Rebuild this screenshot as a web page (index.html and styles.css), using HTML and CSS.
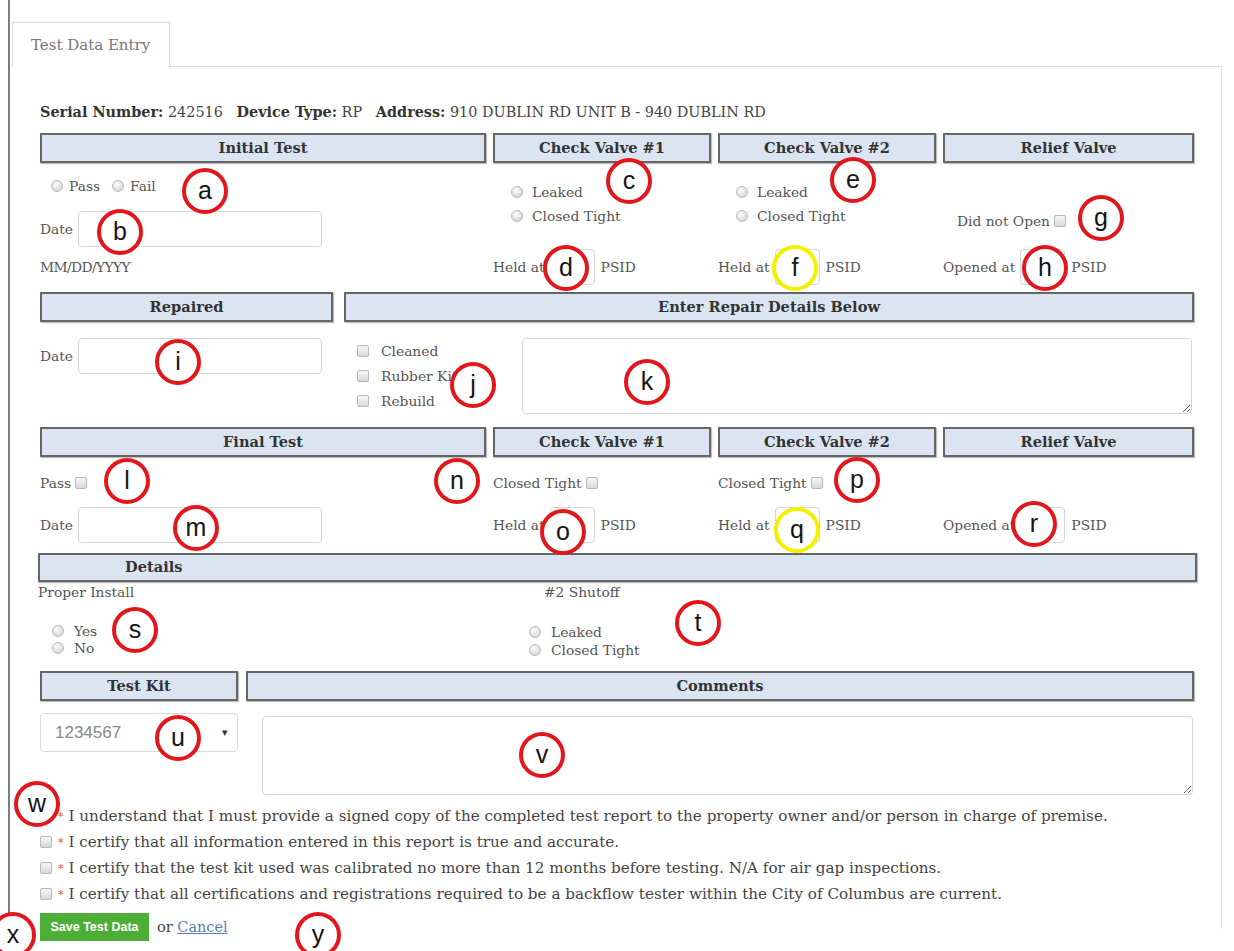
FILE: index.html
```html
<!DOCTYPE html>
<html lang="en">
<head>
<meta charset="utf-8">
<title>Test Data Entry</title>
<link rel="stylesheet" href="styles.css">
</head>
<body>
<div class="page">
  <div class="tabs">
    <div class="tab">Test Data Entry</div>
    <div class="tab-fill"></div>
  </div>

  <div class="panel">
    <p class="device"><b>Serial Number:</b> 242516 &nbsp; <b>Device Type:</b> RP &nbsp; <b>Address:</b> 910 DUBLIN RD UNIT B - 940 DUBLIN RD</p>

    <!-- initial test -->
    <div class="sec sec-4 rows-1">
      <div class="hd">Initial Test</div>
      <div class="hd">Check Valve #1</div>
      <div class="hd">Check Valve #2</div>
      <div class="hd">Relief Valve</div>

      <div class="cell init">
        <div class="inline-radios">
          <label><input type="radio" name="init"> Pass</label>
          <label><input type="radio" name="init"> Fail</label>
        </div>
        <div class="date-row"><span class="lbl">Date</span><input class="text date" type="text"></div>
        <div class="hint">MM/DD/YYYY</div>
      </div>
      <div class="cell valve">
        <label class="rline"><input type="radio" name="cv1"> Leaked</label>
        <label class="rline"><input type="radio" name="cv1"> Closed Tight</label>
        <div class="held"><span class="lbl">Held at</span><input class="text small" type="text"><span class="lbl">PSID</span></div>
      </div>
      <div class="cell valve">
        <label class="rline"><input type="radio" name="cv2"> Leaked</label>
        <label class="rline"><input type="radio" name="cv2"> Closed Tight</label>
        <div class="held"><span class="lbl">Held at</span><input class="text small" type="text"><span class="lbl">PSID</span></div>
      </div>
      <div class="cell relief">
        <label class="noopen">Did not Open <input type="checkbox"></label>
        <div class="held"><span class="lbl">Opened at</span><input class="text small" type="text"><span class="lbl">PSID</span></div>
      </div>
    </div>

    <!-- repairs -->
    <div class="sec sec-2 rows-2">
      <div class="hd">Repaired</div>
      <div class="hd">Enter Repair Details Below</div>

      <div class="cell repaired">
        <div class="date-row"><span class="lbl">Date</span><input class="text date" type="text"></div>
      </div>
      <div class="cell repair">
        <div class="checks">
          <label><input type="checkbox"> Cleaned</label>
          <label><input type="checkbox"> Rubber Kit</label>
          <label><input type="checkbox"> Rebuild</label>
        </div>
        <textarea class="repair-notes"></textarea>
      </div>
    </div>

    <!-- final test -->
    <div class="sec sec-4 rows-3">
      <div class="hd">Final Test</div>
      <div class="hd">Check Valve #1</div>
      <div class="hd">Check Valve #2</div>
      <div class="hd">Relief Valve</div>

      <div class="cell final">
        <label class="cline">Pass <input type="checkbox"></label>
        <div class="date-row"><span class="lbl">Date</span><input class="text date" type="text"></div>
      </div>
      <div class="cell final">
        <label class="cline">Closed Tight <input type="checkbox"></label>
        <div class="held"><span class="lbl">Held at</span><input class="text small" type="text"><span class="lbl">PSID</span></div>
      </div>
      <div class="cell final">
        <label class="cline">Closed Tight <input type="checkbox"></label>
        <div class="held"><span class="lbl">Held at</span><input class="text small" type="text"><span class="lbl">PSID</span></div>
      </div>
      <div class="cell final-relief">
        <div class="held"><span class="lbl">Opened at</span><input class="text small" type="text"><span class="lbl">PSID</span></div>
      </div>
    </div>

    <!-- details -->
    <div class="hd details-hd">Details</div>
    <div class="details">
      <div class="dcol install">
        <div class="dtitle">Proper Install</div>
        <div class="dradios">
          <label><input type="radio" name="inst"> Yes</label>
          <label><input type="radio" name="inst"> No</label>
        </div>
      </div>
      <div class="dcol shutoff">
        <div class="dtitle">#2 Shutoff</div>
        <div class="dradios">
          <label><input type="radio" name="shut"> Leaked</label>
          <label><input type="radio" name="shut"> Closed Tight</label>
        </div>
      </div>
    </div>

    <!-- kit and comments -->
    <div class="sec sec-kit rows-4">
      <div class="hd">Test Kit</div>
      <div class="hd">Comments</div>
      <div class="cell">
        <div class="select"><span class="sel-val">1234567</span><span class="sel-arrow">&#9662;</span></div>
      </div>
      <div class="cell">
        <textarea class="comments"></textarea>
      </div>
    </div>

    <ul class="certs">
      <li><input type="checkbox"><span class="req">*</span>I understand that I must provide a signed copy of the completed test report to the property owner and/or person in charge of premise.</li>
      <li><input type="checkbox"><span class="req">*</span>I certify that all information entered in this report is true and accurate.</li>
      <li><input type="checkbox"><span class="req">*</span>I certify that the test kit used was calibrated no more than 12 months before testing. N/A for air gap inspections.</li>
      <li><input type="checkbox"><span class="req">*</span>I certify that all certifications and registrations required to be a backflow tester within the City of Columbus are current.</li>
    </ul>

    <div class="actions">
      <button class="save" type="button">Save Test Data</button>
      <span class="or">or <a href="#">Cancel</a></span>
    </div>
  </div>
</div>

<!-- lettered callouts over the form fields -->
<div class="marks">
  <span class="mark m-a">a</span>
  <span class="mark m-b">b</span>
  <span class="mark m-c">c</span>
  <span class="mark m-d">d</span>
  <span class="mark m-e">e</span>
  <span class="mark yellow m-f">f</span>
  <span class="mark m-g">g</span>
  <span class="mark m-h">h</span>
  <span class="mark m-i">i</span>
  <span class="mark m-j">j</span>
  <span class="mark m-k">k</span>
  <span class="mark m-l">l</span>
  <span class="mark m-m">m</span>
  <span class="mark m-n">n</span>
  <span class="mark m-o">o</span>
  <span class="mark m-p">p</span>
  <span class="mark yellow m-q">q</span>
  <span class="mark m-r">r</span>
  <span class="mark m-s">s</span>
  <span class="mark m-t">t</span>
  <span class="mark m-u">u</span>
  <span class="mark m-v">v</span>
  <span class="mark m-w">w</span>
  <span class="mark m-x">x</span>
  <span class="mark m-y">y</span>
</div>
</body>
</html>
```

FILE: styles.css
```css
html, body {
  margin: 0;
  padding: 0;
  background: #fff;
}

body {
  font-family: "DejaVu Serif", "Liberation Serif", serif;
  font-size: 13.8px;
  color: #444;
  width: 1234px;
  height: 951px;
  overflow: hidden;
}

/* outer frame: dark rule on the left edge */
.page {
  margin-left: 8px;
  width: 1214px;
  height: 951px;
  box-sizing: border-box;
  border-left: 2px solid #7d7d7d;
  padding-top: 22px;
  padding-left: 2px;
}

/* tab strip */
.tabs {
  display: flex;
  height: 45px;
  width: 1210px;
}

.tab {
  width: 158px;
  box-sizing: border-box;
  border: 1px solid #dcdcdc;
  border-bottom: none;
  padding-left: 18px;
  line-height: 44px;
  font-size: 15px;
  color: #777;
}

.tab-fill {
  flex: 1;
  border-bottom: 1px solid #dcdcdc;
}

.panel {
  width: 1210px;
  height: 862px;
  box-sizing: border-box;
  border-right: 1px solid #e6e6e6;
  padding-left: 28px;
  padding-top: 36px;
}

.device {
  margin: 0 0 12px;
  line-height: 18px;
  font-size: 14.4px;
  color: #444;
}

.device b {
  color: #333;
}

/* section header bars */
.hd {
  height: 30px;
  box-sizing: border-box;
  border: 2px solid #666;
  background: #dbe5f2;
  box-shadow: 1px 1px 1px rgba(0, 0, 0, 0.25);
  font-weight: bold;
  font-size: 14.6px;
  text-align: center;
  line-height: 25px;
  color: #333;
}

.sec {
  display: grid;
  column-gap: 7px;
}

.sec-4 {
  grid-template-columns: 446px 218px 218px 251px;
}

.sec-2 {
  grid-template-columns: 293px 850px;
  column-gap: 11px;
}

.sec-kit {
  grid-template-columns: 198px 948px;
  column-gap: 8px;
}

.rows-1 { grid-template-rows: 30px 129px; }
.rows-2 { grid-template-rows: 31px 104px; }
.rows-3 { grid-template-rows: 31px 95px; }
.rows-4 { grid-template-rows: 30px 102px; }

.cell {
  min-width: 0;
}

label {
  color: #555;
}

.lbl {
  color: #555;
}

/* native controls restyled as soft grey widgets */
input[type="radio"],
input[type="checkbox"] {
  -webkit-appearance: none;
  appearance: none;
  margin: 0;
  width: 12px;
  height: 12px;
  box-sizing: border-box;
  border: 1px solid #b9b9b9;
  vertical-align: middle;
  flex: none;
}

input[type="radio"] {
  border-radius: 50%;
  background: radial-gradient(circle at 40% 35%, #fbfbfb 0, #e2e2e2 55%, #cfcfcf 100%);
}

input[type="checkbox"] {
  border-radius: 2px;
  background: linear-gradient(#f6f6f6, #d9d9d9);
}

.text {
  box-sizing: border-box;
  border: 1px solid #d6d6d6;
  border-radius: 4px;
  background: #fff;
  margin: 0;
  font: inherit;
}

.date {
  width: 244px;
  height: 36px;
}

.small {
  width: 45px;
  height: 36px;
  margin: 0 6px 0 5px;
}

/* initial test column */
.init {
  padding-top: 11px;
}

.inline-radios {
  display: flex;
  height: 24px;
  align-items: center;
  padding-left: 11px;
}

.inline-radios label {
  display: flex;
  align-items: center;
  gap: 6px;
  margin-right: 12px;
}

.date-row {
  display: flex;
  align-items: center;
  height: 36px;
}

.date-row .lbl {
  width: 38px;
}

.init .date-row {
  margin-top: 13px;
}

.hint {
  margin-top: 8px;
  line-height: 24px;
  color: #555;
  letter-spacing: -0.6px;
}

/* check valve columns */
.valve {
  padding-top: 17px;
}

.rline {
  display: flex;
  align-items: center;
  height: 24px;
  padding-left: 18px;
  gap: 9px;
}

.held {
  display: flex;
  align-items: center;
  height: 36px;
  margin-top: 21px;
}

.relief {
  padding-top: 46px;
}

.noopen {
  display: flex;
  align-items: center;
  height: 24px;
  padding-left: 14px;
  gap: 4px;
}

.relief .held {
  margin-top: 16px;
}

/* repairs */
.repaired {
  padding-top: 15px;
}

.repair {
  display: flex;
  padding-top: 15px;
}

.checks {
  width: 178px;
  box-sizing: border-box;
  padding-left: 13px;
}

.checks label {
  display: flex;
  align-items: center;
  gap: 12px;
  height: 25px;
  margin-top: -6px;
  margin-bottom: 6px;
}

.checks label:first-child {
  margin-top: 0;
}

textarea {
  box-sizing: border-box;
  border: 1px solid #d6d6d6;
  border-radius: 4px;
  background: #fff;
  margin: 0;
  font: inherit;
}

.repair-notes {
  width: 670px;
  height: 76px;
}

/* final test */
.final {
  padding-top: 13px;
}

.cline {
  display: flex;
  align-items: center;
  gap: 4px;
  height: 24px;
}

.final .date-row,
.final .held {
  margin-top: 12px;
}

.final-relief {
  padding-top: 49px;
}

.final-relief .held {
  margin-top: 0;
}

/* details */
.details-hd {
  margin-left: -2px;
  width: 1159px;
  height: 29px;
  text-align: left;
  padding-left: 85px;
  line-height: 24px;
}

.details {
  display: flex;
  height: 89px;
}

.dcol {
  display: flex;
  flex-direction: column;
}

.install {
  width: 491px;
  margin-left: -2px;
}

.dtitle {
  line-height: 20px;
  color: #555;
}

.dradios {
  margin-top: 20px;
  padding-left: 14px;
}

.dradios label {
  display: flex;
  align-items: center;
  gap: 10px;
  height: 17px;
}

.shutoff .dtitle {
  padding-left: 15px;
}

.shutoff .dradios {
  margin-top: 21px;
  padding-left: 0;
}

.shutoff .dradios label {
  height: 18px;
}

/* kit select + comments */
.select {
  margin-top: 12px;
  height: 39px;
  box-sizing: border-box;
  border: 1px solid #d9d9d9;
  border-radius: 4px;
  display: flex;
  align-items: center;
  padding: 0 9px 0 14px;
  font-family: "Liberation Sans", Arial, sans-serif;
  font-size: 17px;
  color: #888;
}

.sel-val {
  flex: 1;
}

.sel-arrow {
  color: #333;
  font-size: 11px;
}

.comments {
  display: block;
  margin: 15px 0 0 16px;
  width: 931px;
  height: 79px;
}

/* certification statements */
.certs {
  list-style: none;
  margin: 0;
  padding: 0;
}

.certs li {
  display: flex;
  align-items: center;
  height: 26px;
  color: #444;
  font-size: 15.2px;
  white-space: nowrap;
}

.req {
  color: #d9534f;
  margin: 0 5px 0 6px;
  font-size: 11px;
}

.actions {
  display: flex;
  align-items: center;
  margin-top: 6px;
}

.save {
  width: 109px;
  height: 28px;
  border: none;
  border-radius: 0;
  background: #4cae36;
  color: #fff;
  font-family: "Liberation Sans", Arial, sans-serif;
  font-weight: bold;
  font-size: 12.5px;
  padding: 0;
}

.or {
  margin-left: 8px;
  color: #444;
  font-size: 14.5px;
}

.or a {
  color: #5a7fb8;
}

/* lettered callout rings */
.mark {
  position: absolute;
  width: 46px;
  height: 46px;
  box-sizing: border-box;
  border: 4px solid #e3161c;
  border-radius: 50%;
  background: #fff;
  display: flex;
  align-items: center;
  justify-content: center;
  font-family: "Liberation Sans", Arial, sans-serif;
  font-size: 25px;
  line-height: 1;
  color: #151515;
  padding-bottom: 2px;
}

.mark.yellow {
  border-color: #f4f000;
}

.m-a { left: 182px; top: 168px; }
.m-b { left: 97px; top: 209px; }
.m-c { left: 606px; top: 158px; }
.m-d { left: 543px; top: 245px; }
.m-e { left: 830px; top: 157px; }
.m-f { left: 772px; top: 245px; }
.m-g { left: 1078px; top: 195px; }
.m-h { left: 1022px; top: 245px; }
.m-i { left: 155px; top: 339px; }
.m-j { left: 450px; top: 362px; }
.m-k { left: 624px; top: 359px; }
.m-l { left: 104px; top: 458px; }
.m-m { left: 173px; top: 505px; }
.m-n { left: 434px; top: 458px; }
.m-o { left: 540px; top: 509px; }
.m-p { left: 834px; top: 457px; }
.m-q { left: 774px; top: 507px; }
.m-r { left: 1011px; top: 501px; }
.m-s { left: 112px; top: 607px; }
.m-t { left: 675px; top: 600px; }
.m-u { left: 155px; top: 715px; }
.m-v { left: 519px; top: 732px; }
.m-w { left: 14px; top: 781px; }
.m-x { left: -10px; top: 912px; }
.m-y { left: 295px; top: 912px; }
```
